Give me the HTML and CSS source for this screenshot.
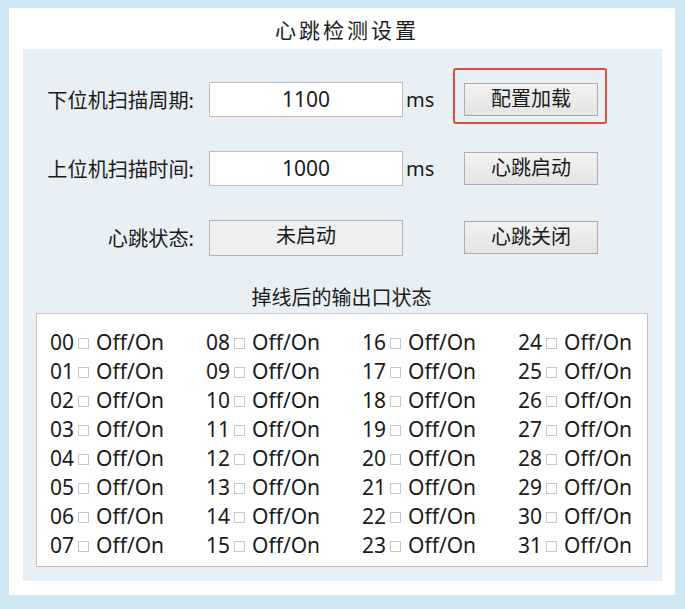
FILE: index.html
```html
<!DOCTYPE html>
<html lang="zh-CN">
<head>
<meta charset="utf-8">
<title>心跳检测设置</title>
<link rel="stylesheet" href="styles.css">
</head>
<body>
<div class="window">
  <div class="title">心跳检测设置</div>
  <div class="panel">
    <div class="row">
      <span class="lbl">下位机扫描周期:</span>
      <div class="field">1100</div>
      <span class="unit">ms</span>
      <div class="btn-wrap"><div class="btn">配置加载</div><div class="highlight"></div></div>
    </div>
    <div class="row">
      <span class="lbl">上位机扫描时间:</span>
      <div class="field">1000</div>
      <span class="unit">ms</span>
      <div class="btn-wrap"><div class="btn">心跳启动</div></div>
    </div>
    <div class="row">
      <span class="lbl">心跳状态:</span>
      <div class="field status">未启动</div>
      <span class="unit"></span>
      <div class="btn-wrap"><div class="btn">心跳关闭</div></div>
    </div>
    <div class="subtitle">掉线后的输出口状态</div>
    <div class="group">
      <div class="grid">
        <div class="item"><span class="num">00</span><span class="box"></span><span>Off/On</span></div>
        <div class="item"><span class="num">01</span><span class="box"></span><span>Off/On</span></div>
        <div class="item"><span class="num">02</span><span class="box"></span><span>Off/On</span></div>
        <div class="item"><span class="num">03</span><span class="box"></span><span>Off/On</span></div>
        <div class="item"><span class="num">04</span><span class="box"></span><span>Off/On</span></div>
        <div class="item"><span class="num">05</span><span class="box"></span><span>Off/On</span></div>
        <div class="item"><span class="num">06</span><span class="box"></span><span>Off/On</span></div>
        <div class="item"><span class="num">07</span><span class="box"></span><span>Off/On</span></div>
        <div class="item"><span class="num">08</span><span class="box"></span><span>Off/On</span></div>
        <div class="item"><span class="num">09</span><span class="box"></span><span>Off/On</span></div>
        <div class="item"><span class="num">10</span><span class="box"></span><span>Off/On</span></div>
        <div class="item"><span class="num">11</span><span class="box"></span><span>Off/On</span></div>
        <div class="item"><span class="num">12</span><span class="box"></span><span>Off/On</span></div>
        <div class="item"><span class="num">13</span><span class="box"></span><span>Off/On</span></div>
        <div class="item"><span class="num">14</span><span class="box"></span><span>Off/On</span></div>
        <div class="item"><span class="num">15</span><span class="box"></span><span>Off/On</span></div>
        <div class="item"><span class="num">16</span><span class="box"></span><span>Off/On</span></div>
        <div class="item"><span class="num">17</span><span class="box"></span><span>Off/On</span></div>
        <div class="item"><span class="num">18</span><span class="box"></span><span>Off/On</span></div>
        <div class="item"><span class="num">19</span><span class="box"></span><span>Off/On</span></div>
        <div class="item"><span class="num">20</span><span class="box"></span><span>Off/On</span></div>
        <div class="item"><span class="num">21</span><span class="box"></span><span>Off/On</span></div>
        <div class="item"><span class="num">22</span><span class="box"></span><span>Off/On</span></div>
        <div class="item"><span class="num">23</span><span class="box"></span><span>Off/On</span></div>
        <div class="item"><span class="num">24</span><span class="box"></span><span>Off/On</span></div>
        <div class="item"><span class="num">25</span><span class="box"></span><span>Off/On</span></div>
        <div class="item"><span class="num">26</span><span class="box"></span><span>Off/On</span></div>
        <div class="item"><span class="num">27</span><span class="box"></span><span>Off/On</span></div>
        <div class="item"><span class="num">28</span><span class="box"></span><span>Off/On</span></div>
        <div class="item"><span class="num">29</span><span class="box"></span><span>Off/On</span></div>
        <div class="item"><span class="num">30</span><span class="box"></span><span>Off/On</span></div>
        <div class="item"><span class="num">31</span><span class="box"></span><span>Off/On</span></div>
      </div>
    </div>
  </div>
</div>
</body>
</html>
```

FILE: styles.css
```css
html, body {
  margin: 0;
  padding: 0;
}
body {
  width: 685px;
  height: 609px;
  background: #cfe7f1;
  font-family: "Noto Sans", "Noto Sans CJK SC", sans-serif;
  font-size: 20px;
  color: #1b1b1b;
  overflow: hidden;
}
.window {
  margin: 8px 10px 0 9px;
  width: 666px;
  height: 587px;
  background: #ffffff;
  display: flex;
  flex-direction: column;
}
.title {
  height: 41px;
  line-height: 44px;
  text-align: center;
  font-size: 21px;
  letter-spacing: 3px;
  padding-left: 10px;
  box-sizing: border-box;
}
.panel {
  margin: 0 13px 14px 14px;
  flex: 1;
  background: #e8f0f6;
  padding: 33px 0 14px 0;
  display: flex;
  flex-direction: column;
}
.row {
  display: flex;
  align-items: center;
  height: 35px;
  margin-bottom: 34px;
}
.row:nth-of-type(3) {
  margin-bottom: 0;
}
.lbl {
  width: 171px;
  margin-right: 15px;
  text-align: right;
  white-space: nowrap;
  font-size: 20.2px;
}
.field {
  width: 194px;
  height: 35px;
  box-sizing: border-box;
  border: 1px solid #bdbdbd;
  background: #ffffff;
  text-align: center;
  line-height: 33px;
  font-size: 21px;
}
.field.status {
  height: 36px;
  background: #efefef;
  border-color: #b5b5b5;
  line-height: 30px;
  font-size: 20px;
}
.unit {
  width: 61px;
  padding-left: 3px;
  box-sizing: border-box;
  line-height: 35px;
}
.btn-wrap {
  position: relative;
}
.btn {
  width: 134px;
  height: 33px;
  box-sizing: border-box;
  border: 1px solid #adadad;
  background: linear-gradient(#f2f2f2, #e4e4e4);
  text-align: center;
  line-height: 30px;
}
.highlight {
  position: absolute;
  left: -11px;
  top: -15px;
  width: 154px;
  height: 56px;
  box-sizing: border-box;
  border: 2px solid #e24b40;
  border-radius: 3px;
}
.subtitle {
  margin-top: 31px;
  height: 24px;
  line-height: 24px;
  text-align: center;
  margin-bottom: 3px;
  padding-right: 2px;
}
.group {
  margin: 0 14px 0 13px;
  border: 1px solid #c6c6c6;
  border-right-color: #bdbdbd;
  border-bottom-color: #bdbdbd;
  background: #ffffff;
  padding: 14px 0 6px 13px;
  flex: 1;
}
.grid {
  display: grid;
  grid-template-columns: repeat(4, 156px);
  grid-template-rows: repeat(8, 29px);
  grid-auto-flow: column;
}
.item {
  display: flex;
  align-items: center;
  line-height: 29px;
  white-space: nowrap;
  font-size: 21px;
}
.box {
  width: 11px;
  height: 11px;
  box-sizing: border-box;
  border: 1px solid #c8c8c8;
  background: #ffffff;
  margin: 1px 7px 0 4px;
}
```
